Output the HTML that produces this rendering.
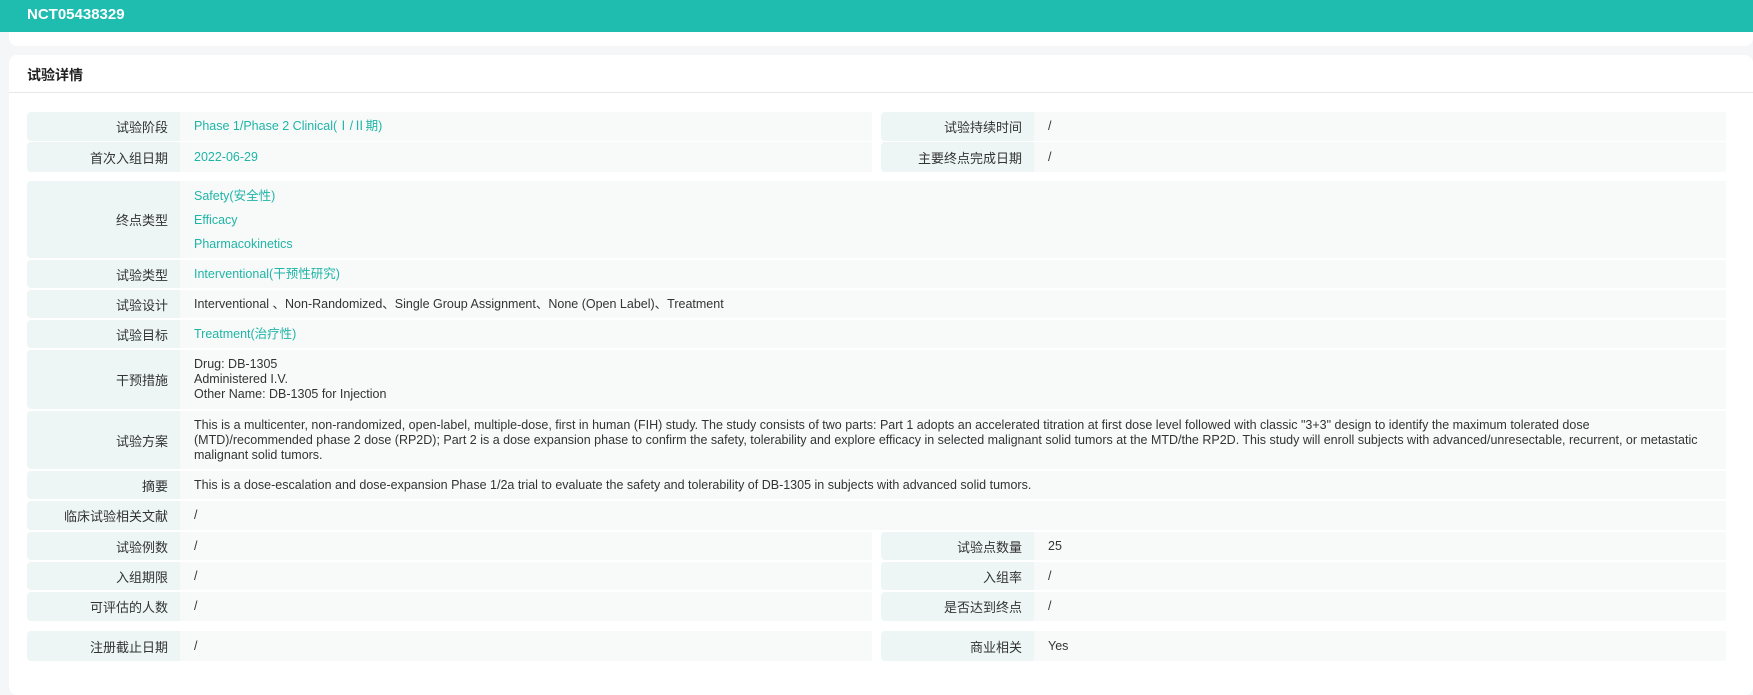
<!DOCTYPE html>
<html><head><meta charset="utf-8"><style>
*{margin:0;padding:0;box-sizing:border-box}
body{width:1753px;height:677px;background:#f5f6f8;font-family:"Liberation Sans","Noto Sans CJK SC",sans-serif;font-size:12.5px;color:#333;position:relative;overflow:hidden}
.hdr{position:absolute;left:0;top:0;width:1753px;height:32px;background:#1fbdb0;color:#fff;font-weight:bold;font-size:15px;padding-left:27px;line-height:30px}
.c1{position:absolute;left:9px;top:32px;width:1744px;height:14px;background:#fff;border-radius:0 0 8px 8px}
.c2{position:absolute;left:9px;top:55px;width:1744px;height:640px;background:#fff;border-radius:8px}
.title{position:absolute;left:27px;top:65px;font-size:14px;font-weight:bold;color:#222}
.sep{position:absolute;left:9px;top:92px;width:1744px;height:1px;background:#e8e8e8}
.l,.v{position:absolute;display:flex;align-items:center}
.l{background:#edf5f5;justify-content:flex-end;padding-right:12px;border-radius:4px 0 0 4px;color:#333;font-size:13px}
.v{background:#f8fafa;padding-left:14px;white-space:nowrap;line-height:15px}
.t{color:#1fb5a6}
</style></head><body>
<div class="hdr">NCT05438329</div>
<div class="c1"></div>
<div class="c2"></div>
<div class="title">试验详情</div>
<div class="sep"></div>

<div class="l" style="left:27px;top:112px;width:153px;height:29px">试验阶段</div>
<div class="v t" style="left:180px;top:112px;width:692px;height:29px">Phase 1/Phase 2 Clinical(Ⅰ/Ⅱ期)</div>
<div class="l" style="left:881px;top:112px;width:153px;height:29px">试验持续时间</div>
<div class="v" style="left:1034px;top:112px;width:692px;height:29px">/</div>
<div class="l" style="left:27px;top:142px;width:153px;height:30px">首次入组日期</div>
<div class="v t" style="left:180px;top:142px;width:692px;height:30px">2022-06-29</div>
<div class="l" style="left:881px;top:142px;width:153px;height:30px">主要终点完成日期</div>
<div class="v" style="left:1034px;top:142px;width:692px;height:30px">/</div>

<div class="l" style="left:27px;top:181px;width:153px;height:77px">终点类型</div>
<div class="v t" style="left:180px;top:181px;width:1546px;height:77px;line-height:24px;align-items:center"><div>Safety(安全性)<br>Efficacy<br>Pharmacokinetics</div></div>
<div class="l" style="left:27px;top:260px;width:153px;height:28px">试验类型</div>
<div class="v t" style="left:180px;top:260px;width:1546px;height:28px">Interventional(干预性研究)</div>
<div class="l" style="left:27px;top:290px;width:153px;height:28px">试验设计</div>
<div class="v" style="left:180px;top:290px;width:1546px;height:28px">Interventional 、Non-Randomized、Single Group Assignment、None (Open Label)、Treatment</div>
<div class="l" style="left:27px;top:320px;width:153px;height:28px">试验目标</div>
<div class="v t" style="left:180px;top:320px;width:1546px;height:28px">Treatment(治疗性)</div>
<div class="l" style="left:27px;top:350px;width:153px;height:59px">干预措施</div>
<div class="v" style="left:180px;top:350px;width:1546px;height:59px"><div>Drug: DB-1305<br>Administered I.V.<br>Other Name: DB-1305 for Injection</div></div>
<div class="l" style="left:27px;top:411px;width:153px;height:58px">试验方案</div>
<div class="v" style="left:180px;top:411px;width:1546px;height:58px"><div>This is a multicenter, non-randomized, open-label, multiple-dose, first in human (FIH) study. The study consists of two parts: Part 1 adopts an accelerated titration at first dose level followed with classic "3+3" design to identify the maximum tolerated dose<br>(MTD)/recommended phase 2 dose (RP2D); Part 2 is a dose expansion phase to confirm the safety, tolerability and explore efficacy in selected malignant solid tumors at the MTD/the RP2D. This study will enroll subjects with advanced/unresectable, recurrent, or metastatic<br>malignant solid tumors.</div></div>
<div class="l" style="left:27px;top:471px;width:153px;height:28px">摘要</div>
<div class="v" style="left:180px;top:471px;width:1546px;height:28px">This is a dose-escalation and dose-expansion Phase 1/2a trial to evaluate the safety and tolerability of DB-1305 in subjects with advanced solid tumors.</div>
<div class="l" style="left:27px;top:501px;width:153px;height:29px">临床试验相关文献</div>
<div class="v" style="left:180px;top:501px;width:1546px;height:29px">/</div>

<div class="l" style="left:27px;top:532px;width:153px;height:28px">试验例数</div>
<div class="v" style="left:180px;top:532px;width:692px;height:28px">/</div>
<div class="l" style="left:881px;top:532px;width:153px;height:28px">试验点数量</div>
<div class="v" style="left:1034px;top:532px;width:692px;height:28px">25</div>
<div class="l" style="left:27px;top:562px;width:153px;height:28px">入组期限</div>
<div class="v" style="left:180px;top:562px;width:692px;height:28px">/</div>
<div class="l" style="left:881px;top:562px;width:153px;height:28px">入组率</div>
<div class="v" style="left:1034px;top:562px;width:692px;height:28px">/</div>
<div class="l" style="left:27px;top:592px;width:153px;height:29px">可评估的人数</div>
<div class="v" style="left:180px;top:592px;width:692px;height:29px">/</div>
<div class="l" style="left:881px;top:592px;width:153px;height:29px">是否达到终点</div>
<div class="v" style="left:1034px;top:592px;width:692px;height:29px">/</div>

<div class="l" style="left:27px;top:631px;width:153px;height:30px">注册截止日期</div>
<div class="v" style="left:180px;top:631px;width:692px;height:30px">/</div>
<div class="l" style="left:881px;top:631px;width:153px;height:30px">商业相关</div>
<div class="v" style="left:1034px;top:631px;width:692px;height:30px">Yes</div>
</body></html>
